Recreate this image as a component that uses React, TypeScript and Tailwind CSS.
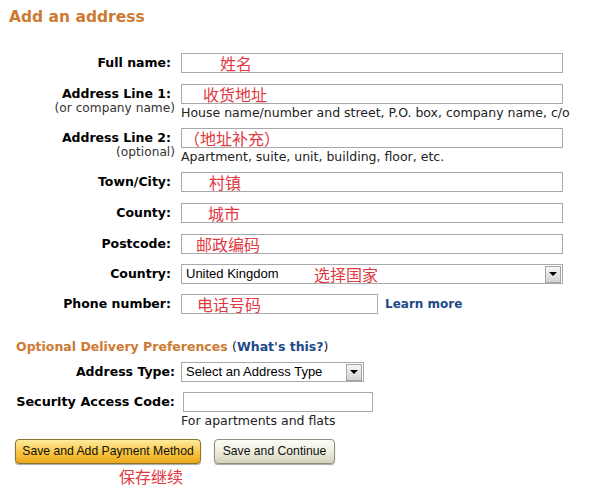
import * as React from 'react';

// Amazon-style "Add an address" form with red CJK annotations over the fields

const cjk = "font-['Noto_Sans_CJK_SC',sans-serif] text-[16px] leading-[18px] text-[#e2383f]";
const boxBorder = 'border border-[#a9a9a9] bg-white';

function DropArrow(): React.ReactElement {
  return (
    <div className="w-[16px] h-[17px] shrink-0 border border-[#a4a4a4] bg-gradient-to-b from-[#f7f7f7] to-[#d2d2d2] flex items-center justify-center">
      <div className="w-0 h-0 border-x-[4px] border-x-transparent border-t-[4px] border-t-black" />
    </div>
  );
}

function Row(props: {
  label: string;
  sub?: string;
  children: React.ReactNode;
  className?: string;
}): React.ReactElement {
  return (
    <div className={'flex items-start ' + (props.className ?? '')}>
      <div className="w-[175px] shrink-0 text-right">
        <div className="pr-[4px] font-bold text-[12.5px] leading-[20px]">{props.label}</div>
        {props.sub ? (
          <div className="-mt-[3px] text-[12.2px] leading-[14px] text-[#333]">{props.sub}</div>
        ) : null}
      </div>
      <div className="ml-[6px]">{props.children}</div>
    </div>
  );
}

function Hint(props: { children: React.ReactNode }): React.ReactElement {
  return <div className="text-[12.5px] leading-[18px] text-[#222] whitespace-nowrap">{props.children}</div>;
}

export default function App(): React.ReactElement {
  return (
    <div className="w-[600px] h-[491px] overflow-hidden bg-white text-black font-['DejaVu_Sans',sans-serif]">
      <h1 className="pl-[9px] pt-[7px] text-[15.5px] leading-[20px] font-bold text-[#cd7a32]">Add an address</h1>

      {/* Main address fields */}
      <div className="mt-[26px] flex flex-col">
        <Row label="Full name:" className="mb-[11px]">
          <div className={`w-[382px] h-[20px] ${boxBorder} pl-[38px] ${cjk}`}>姓名</div>
        </Row>
        <Row label="Address Line 1:" sub="(or company name)" className="mb-[6px]">
          <div className={`w-[382px] h-[20px] ${boxBorder} pl-[21px] ${cjk}`}>收货地址</div>
          <Hint>House name/number and street, P.O. box, company name, c/o</Hint>
        </Row>
        <Row label="Address Line 2:" sub="(optional)" className="mb-[6px]">
          <div className={`w-[382px] h-[20px] ${boxBorder} pl-[2px] ${cjk}`}>（地址补充）</div>
          <Hint>Apartment, suite, unit, building, floor, etc.</Hint>
        </Row>
        <Row label="Town/City:" className="mb-[11px]">
          <div className={`w-[382px] h-[20px] ${boxBorder} pl-[27px] ${cjk}`}>村镇</div>
        </Row>
        <Row label="County:" className="mb-[11px]">
          <div className={`w-[382px] h-[20px] ${boxBorder} pl-[26px] ${cjk}`}>城市</div>
        </Row>
        <Row label="Postcode:" className="mb-[10px]">
          <div className={`w-[382px] h-[20px] ${boxBorder} pl-[14px] ${cjk}`}>邮政编码</div>
        </Row>
        <Row label="Country:" className="mb-[10px]">
          <div className={`relative w-[382px] h-[20px] ${boxBorder} flex items-center pr-[1px]`}>
            <span className="flex-1 pl-[4px] font-['Liberation_Sans',sans-serif] text-[13px] leading-[18px]">
              United Kingdom
            </span>
            <DropArrow />
            <span className={`absolute left-[132px] top-0 ${cjk}`}>选择国家</span>
          </div>
        </Row>
        <Row label="Phone number:">
          <div className="flex items-center">
            <div className={`w-[197px] h-[20px] ${boxBorder} pl-[15px] ${cjk}`}>电话号码</div>
            <a className="ml-[7px] font-bold text-[12px] leading-[20px] text-[#1d4a88]">Learn more</a>
          </div>
        </Row>
      </div>

      {/* Optional delivery preferences */}
      <div className="mt-[25px] pl-[16px] text-[12.5px] leading-[16px] font-bold whitespace-nowrap">
        <span className="text-[#cd7a32]">Optional Delivery Preferences</span>{' '}
        <span className="font-normal text-[#222]">(</span>
        <span className="text-[#1d4a88]">What's this?</span>
        <span className="font-normal text-[#222]">)</span>
      </div>

      <div className="mt-[7px] pl-[16px] flex flex-col">
        <div className="flex items-start mb-[10px]">
          <div className="w-[159px] shrink-0 text-right font-bold text-[12.5px] leading-[20px] whitespace-nowrap">
            Address Type:
          </div>
          <div className={`ml-[6px] w-[183px] h-[20px] ${boxBorder} flex items-center pr-[1px]`}>
            <span className="flex-1 pl-[4px] font-['Liberation_Sans',sans-serif] text-[13px] leading-[18px]">
              Select an Address Type
            </span>
            <DropArrow />
          </div>
        </div>
        <div className="flex items-start">
          <div className="w-[159px] shrink-0 text-right font-bold text-[12.8px] leading-[20px] whitespace-nowrap">
            Security Access Code:
          </div>
          <div className="ml-[6px]">
            <div className={`ml-[2px] w-[190px] h-[20px] ${boxBorder}`} />
            <Hint>For apartments and flats</Hint>
          </div>
        </div>
      </div>

      {/* Actions */}
      <div className="mt-[9px] pl-[15px] flex gap-[13px] font-['Liberation_Sans',sans-serif] text-[12.2px] text-[#111]">
        <button
          type="button"
          className="w-[186px] h-[25px] rounded-[4px] border border-[#8a7331] bg-gradient-to-b from-[#feeb9c] via-[#f9c843] to-[#eca81b] shadow-[0_1px_1px_rgba(0,0,0,0.35)]"
        >
          Save and Add Payment Method
        </button>
        <button
          type="button"
          className="w-[121px] h-[25px] rounded-[4px] border border-[#8e8e7e] bg-gradient-to-b from-[#fcfcf6] via-[#eeeedf] to-[#d3d3bb] shadow-[0_1px_1px_rgba(0,0,0,0.35)]"
        >
          Save and Continue
        </button>
      </div>
      <div className={`mt-[3px] pl-[119px] ${cjk}`}>保存继续</div>
    </div>
  );
}
